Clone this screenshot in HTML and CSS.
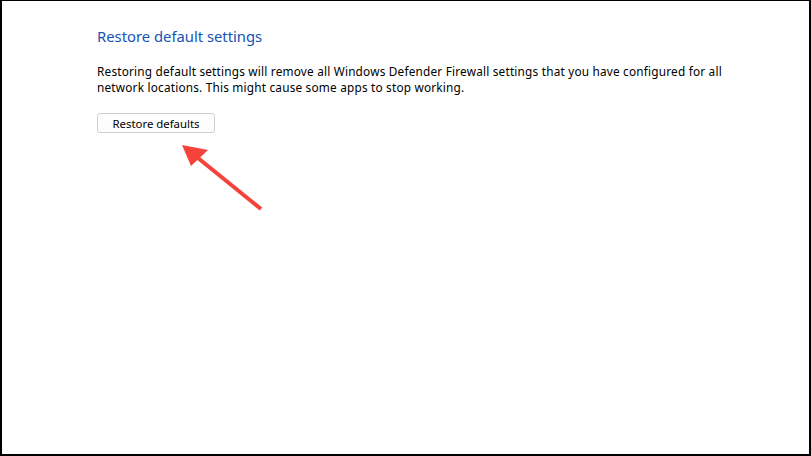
FILE: index.html
```html
<!DOCTYPE html>
<html lang="en">
<head>
  <meta charset="UTF-8">
  <title>Restore default settings</title>
  <link rel="stylesheet" href="styles.css">
</head>
<body>
  <div class="frame">
    <div class="panel">
      <h1 class="title">Restore default settings</h1>
      <p class="desc">Restoring default settings will remove all Windows Defender Firewall settings that you have configured for all network locations. This might cause some apps to stop working.</p>
      <button class="btn">Restore defaults</button>
    </div>
    <svg class="arrow" width="100" height="80" viewBox="0 0 100 80">
      <line x1="89" y1="73" x2="26" y2="22" stroke="#f5423a" stroke-width="4" stroke-linecap="butt"/>
      <polygon points="10,9 36,14 19,30" fill="#f5423a"/>
    </svg>
  </div>
</body>
</html>
```

FILE: styles.css
```css
body { margin: 0; background: #fff; font-family: "Noto Sans", "Open Sans", sans-serif; }
.frame { position: relative; width: 811px; height: 456px; box-sizing: border-box; border: 2px solid #000; border-top-width: 1px; background: #fff; }
.panel { padding: 25px 0 0 95px; }
.title { margin: 0; font-size: 14.8px; font-weight: 400; color: #1553b6; line-height: 20px; }
.desc { margin: 17px 0 0; font-size: 11.8px; letter-spacing: 0.2px; line-height: 16px; color: #000; width: 660px; }
.btn { margin-top: 18px; width: 118px; height: 20px; padding: 0; font-family: inherit; font-size: 11.4px; color: #000; background: #fdfdfd; border: 1px solid #cfcfcf; border-radius: 3px; }
.arrow { position: absolute; left: 170px; top: 135px; }
```
